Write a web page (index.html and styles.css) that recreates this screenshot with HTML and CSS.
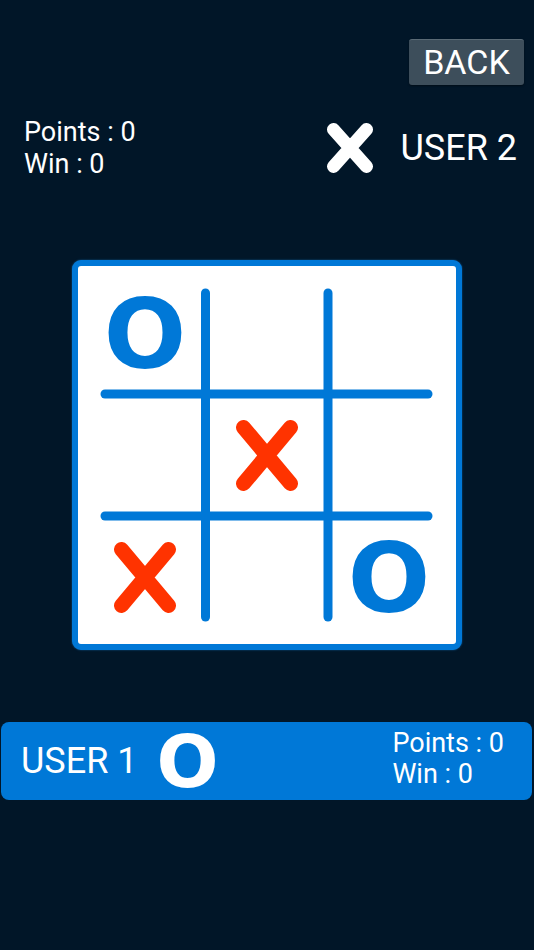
FILE: index.html
```html
<!DOCTYPE html>
<html>
<head>
<meta charset="utf-8">
<link rel="stylesheet" href="styles.css">
</head>
<body>
<div class="screen">
  <div class="topbar">
    <button class="back">BACK</button>
  </div>

  <div class="player-top">
    <div class="stats">
      <div class="stat">Points : 0</div>
      <div class="stat">Win : 0</div>
    </div>
    <div class="ident">
      <svg class="mark-x-small" width="46" height="50" viewBox="0 0 46 50">
        <path d="M6.5 6.5 L39.5 43.5 M39.5 6.5 L6.5 43.5" stroke="#ffffff" stroke-width="13" stroke-linecap="round" fill="none"/>
      </svg>
      <span class="name">USER 2</span>
    </div>
  </div>

  <div class="board-wrap">
    <div class="board">
      <svg class="grid-lines" width="378" height="378" viewBox="0 0 378 378">
        <g stroke="#0078d7" stroke-width="9" stroke-linecap="round">
          <line x1="127.5" y1="27" x2="127.5" y2="351"/>
          <line x1="250" y1="27" x2="250" y2="351"/>
          <line x1="27" y1="128" x2="350" y2="128"/>
          <line x1="27" y1="250" x2="350" y2="250"/>
        </g>
      </svg>
      <div class="cell"><span class="piece-o">O</span></div>
      <div class="cell"></div>
      <div class="cell"></div>
      <div class="cell"></div>
      <div class="cell">
        <svg class="piece-x" width="62" height="71" viewBox="0 0 62 71">
          <path d="M7.5 7.5 L54.5 63.5 M54.5 7.5 L7.5 63.5" stroke="#ff3300" stroke-width="15" stroke-linecap="round" fill="none"/>
        </svg>
      </div>
      <div class="cell"></div>
      <div class="cell">
        <svg class="piece-x" width="62" height="71" viewBox="0 0 62 71">
          <path d="M7.5 7.5 L54.5 63.5 M54.5 7.5 L7.5 63.5" stroke="#ff3300" stroke-width="15" stroke-linecap="round" fill="none"/>
        </svg>
      </div>
      <div class="cell"></div>
      <div class="cell"><span class="piece-o">O</span></div>
    </div>
  </div>

  <div class="player-bar">
    <div class="ident">
      <span class="name">USER 1</span>
      <span class="bar-o">O</span>
    </div>
    <div class="stats bar-stats">
      <div class="stat">Points : 0</div>
      <div class="stat">Win : 0</div>
    </div>
  </div>
</div>
</body>
</html>
```

FILE: styles.css
```css
html, body {
  margin: 0;
  padding: 0;
  background: #011628;
}

body {
  font-family: Roboto, "Liberation Sans", sans-serif;
  color: #ffffff;
}

.screen {
  width: 534px;
  height: 950px;
  background: #011628;
  overflow: hidden;
}

.topbar {
  display: flex;
  justify-content: flex-end;
  padding: 39px 10px 0 0;
}

.back {
  width: 115px;
  height: 46px;
  padding: 0;
  border: none;
  border-top: 1px solid #5a6a75;
  border-radius: 3px;
  background: #3d4e5b;
  color: #ffffff;
  font-family: Roboto, "Liberation Sans", sans-serif;
  font-size: 34px;
  line-height: 45px;
  display: flex;
  align-items: center;
  justify-content: center;
  box-shadow: 0 1px 2px rgba(0, 0, 0, 0.4);
}

.player-top {
  margin-top: 31px;
  display: flex;
  align-items: center;
  justify-content: space-between;
  padding: 0 17px 0 24px;
}

.stats {
  display: flex;
  flex-direction: column;
}

.stat {
  font-size: 27px;
  line-height: 32px;
}

.ident {
  display: flex;
  align-items: center;
}

.mark-x-small {
  display: block;
  margin-right: 27px;
}

.name {
  font-size: 36px;
  line-height: 42px;
}

.board-wrap {
  margin-top: 80px;
  display: flex;
  justify-content: center;
}

.board {
  position: relative;
  width: 366px;
  height: 366px;
  padding: 6px;
  background: #ffffff;
  border: 6px solid #0078d7;
  border-radius: 9px;
  display: grid;
  grid-template-columns: repeat(3, 122px);
  grid-template-rows: repeat(3, 122px);
  box-shadow: 0 0 2px rgba(30, 140, 230, 0.6);
}

.grid-lines {
  position: absolute;
  left: 0;
  top: 0;
  display: block;
}

.cell {
  display: flex;
  align-items: center;
  justify-content: center;
}

.piece-o {
  font-family: "DejaVu Sans", sans-serif;
  font-weight: bold;
  font-size: 97px;
  line-height: 96px;
  color: #0078d7;
  padding-top: 3px;
}

.piece-x {
  display: block;
}

.player-bar {
  margin: 72px 2px 0 1px;
  height: 78px;
  border-radius: 8px;
  background: #0078d7;
  display: flex;
  align-items: center;
  justify-content: space-between;
  padding: 0 28px 0 20px;
}

.bar-o {
  font-family: "DejaVu Sans", sans-serif;
  font-weight: bold;
  font-size: 73px;
  line-height: 72px;
  margin-left: 19px;
  padding-top: 1px;
}

.bar-stats .stat {
  line-height: 31px;
}

.bar-stats {
  padding-bottom: 4px;
}
```
